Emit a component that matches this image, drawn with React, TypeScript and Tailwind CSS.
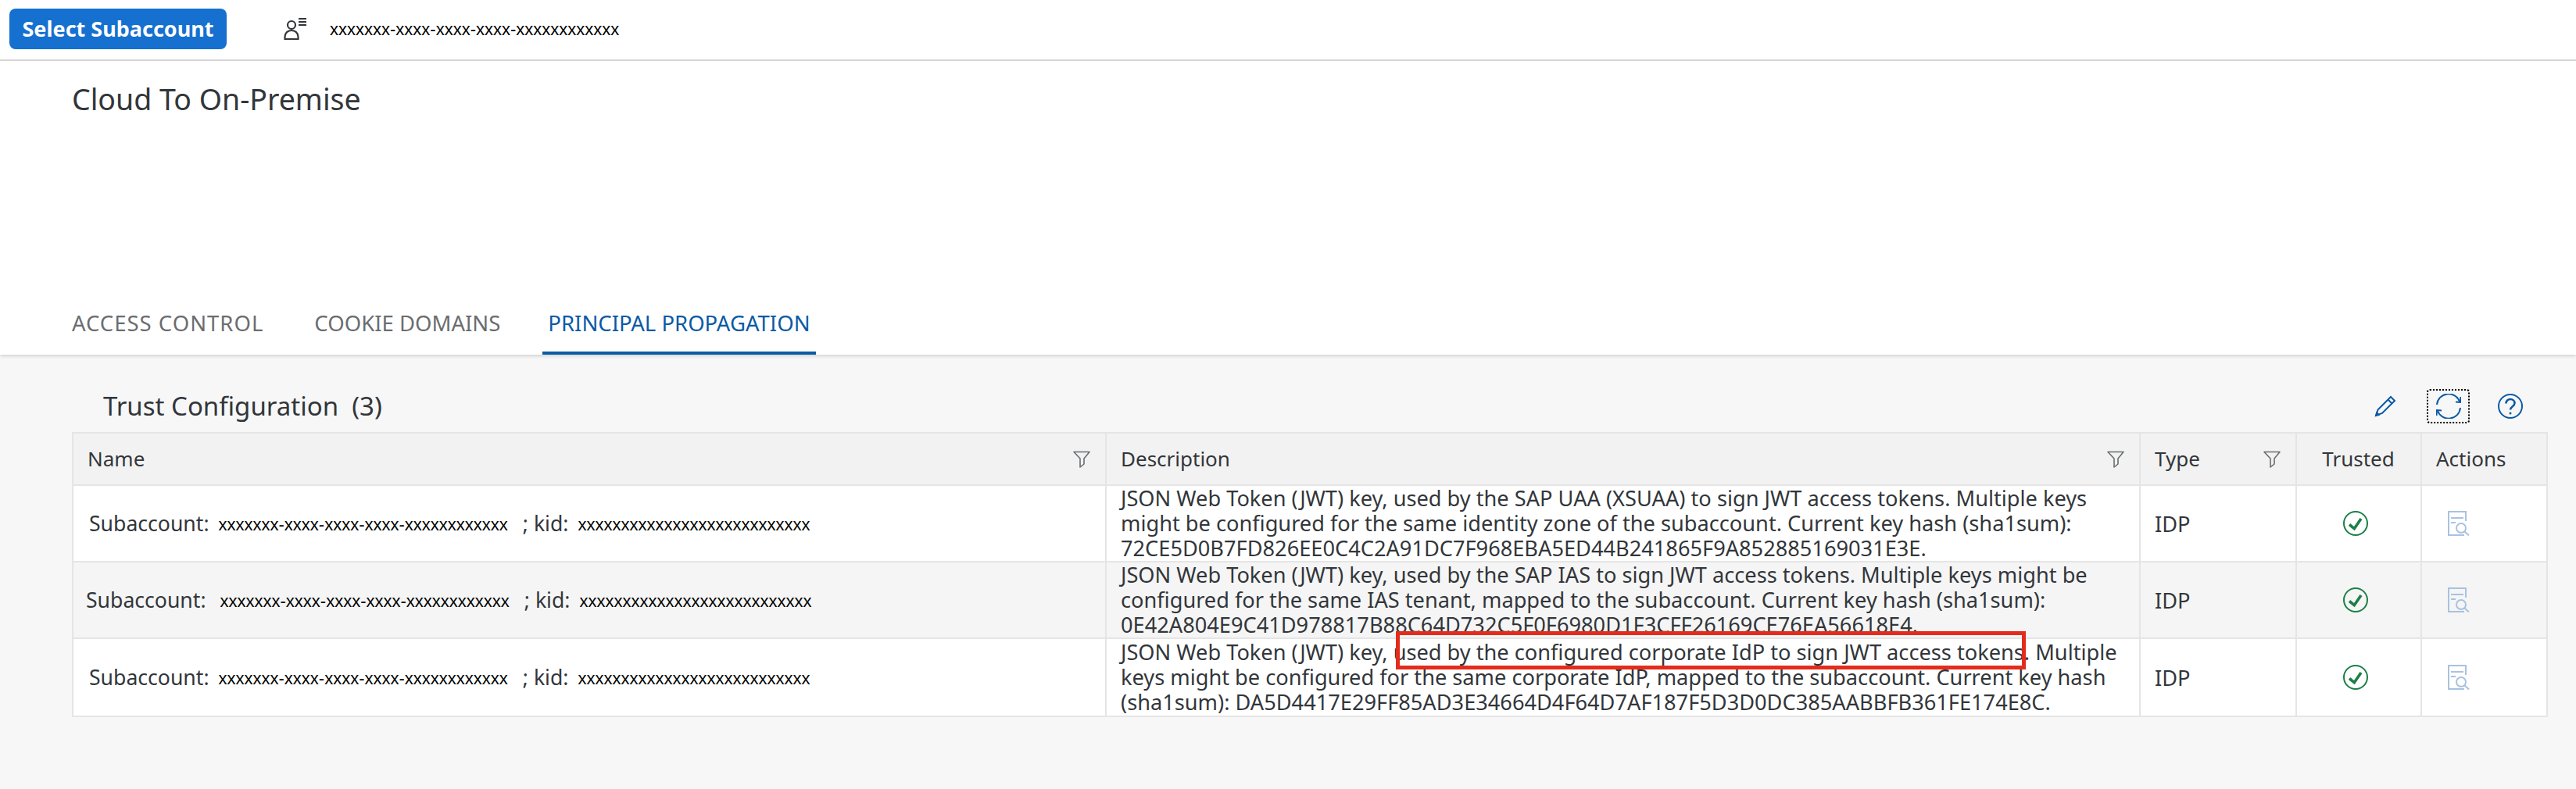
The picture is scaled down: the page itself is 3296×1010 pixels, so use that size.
import { ReactNode } from "react";

const BLUE = "#0a5aa5";

function FilterIcon() {
  return (
    <svg width="22" height="22" viewBox="0 0 22 22" fill="none" stroke="#6a6d70" strokeWidth="1.6">
      <path d="M1 1.5h20l-7 8.5v7l-5 4V10z" strokeLinejoin="round" />
    </svg>
  );
}

function CheckIcon() {
  return (
    <svg className="mr-[8px]" width="32" height="32" viewBox="0 0 32 32" fill="none">
      <circle cx="16" cy="16" r="15" stroke="#1b7f47" strokeWidth="2" />
      <path d="M8 17.5l6.3 5.2L23 10" stroke="#1b7f47" strokeWidth="3.6" />
    </svg>
  );
}

function ReportIcon() {
  return (
    <svg width="28" height="32" viewBox="0 0 28 32" fill="none" stroke="#a8c2e0" strokeWidth="2">
      <path d="M23 13V1H1v30h20" />
      <path d="M4 9h16M4 15h6" />
      <circle cx="17" cy="22" r="6" />
      <path d="M21.5 26.5L27 31.5" />
    </svg>
  );
}

function Th({ children, filter, className }: { children: ReactNode; filter?: boolean; className: string }) {
  return (
    <div className={"flex items-center justify-between border-r-2 border-[#e5e5e5] pl-[18px] pr-[19px] " + className}>
      <span>{children}</span>
      {filter && <FilterIcon />}
    </div>
  );
}

const rows = [
  {
    bg: "bg-white h-[98px]",
    nameIndent: "pl-[20px]",
    gap: "ml-[12px]",
    text: "JSON Web Token (JWT) key, used by the SAP UAA (XSUAA) to sign JWT access tokens. Multiple keys might be configured for the same identity zone of the subaccount. Current key hash (sha1sum): 72CE5D0B7FD826EE0C4C2A91DC7F968EBA5ED44B241865F9A852885169031E3E.",
  },
  {
    bg: "bg-[#f5f5f5] h-[98px]",
    nameIndent: "pl-[16px]",
    gap: "ml-[18px]",
    text: "JSON Web Token (JWT) key, used by the SAP IAS to sign JWT access tokens. Multiple keys might be configured for the same IAS tenant, mapped to the subaccount. Current key hash (sha1sum): 0E42A804E9C41D978817B88C64D732C5F0F6980D1F3CFF26169CE76EA56618E4.",
  },
  {
    bg: "bg-white h-[100px]",
    nameIndent: "pl-[20px]",
    gap: "ml-[12px]",
    text: "JSON Web Token (JWT) key, used by the configured corporate IdP to sign JWT access tokens. Multiple keys might be configured for the same corporate IdP, mapped to the subaccount. Current key hash (sha1sum): DA5D4417E29FF85AD3E34664D4F64D7AF187F5D3D0DC385AABBFB361FE174E8C.",
  },
];

const MASK = "font-['Liberation_Sans',sans-serif] text-[22px] text-black";

export default function App() {
  return (
    <div className="relative flex h-[1010px] w-[3296px] flex-col overflow-hidden bg-[#f7f7f7] font-['Noto_Sans',sans-serif] text-[#32363a]">
      <header className="flex h-[78px] shrink-0 items-center border-b-2 border-[#d9d9d9] bg-white pb-[2px] pl-[12px]">
        <button className="h-[52px] w-[278px] rounded-lg bg-[#1670cf] text-[27px] font-bold text-white">Select Subaccount</button>
        <svg className="ml-[73px]" width="30" height="28" viewBox="0 0 30 28" fill="none" stroke="#32363a" strokeWidth="2.2">
          <circle cx="10" cy="9" r="5" />
          <path d="M1.5 27v-3c0-5 4-8 8.5-8s8.5 3 8.5 8v3z" />
          <path d="M19 1h10M19 5h10M19 9h10" strokeWidth="2" />
        </svg>
        <span className={"ml-[29px] " + MASK}>xxxxxxx-xxxx-xxxx-xxxx-xxxxxxxxxxxx</span>
      </header>

      <section className="flex h-[376px] shrink-0 flex-col justify-between bg-white pl-[92px] shadow-[0_2px_4px_rgba(0,0,0,0.15)]">
        <h1 className="pt-[26px] text-[37.5px] leading-[46px]">Cloud To On-Premise</h1>
        <nav className="flex items-start text-[27.5px] text-[#6a6d70]">
          <a className="mr-[65px] tracking-[1px]">ACCESS CONTROL</a>
          <a className="mr-[54px]">COOKIE DOMAINS</a>
          <a className="border-b-4 border-[#0a5aa5] px-[7px] pb-[16px] text-[#0a5aa5]">PRINCIPAL PROPAGATION</a>
        </nav>
      </section>

      <main className="flex flex-col pl-[92px] pr-[36px]">
        <div className="flex h-[99px] items-center justify-between pl-[40px] pt-[32px]">
          <h2 className="text-[33px]">Trust Configuration&nbsp; (3)</h2>
          <div className="flex items-center pr-[32px]">
            <svg width="28" height="28" viewBox="0 0 28 28" fill="none" stroke={BLUE} strokeWidth="2">
              <path d="M2.5 25.5l2-7L21 2l5 5-16 16z" />
              <path d="M17.5 5.5l5 5" />
              <path d="M0.5 27.5l2-7 5 5z" fill={BLUE} stroke="none" />
            </svg>
            <div className="ml-[39px] flex h-[44px] w-[55px] items-center justify-center rounded-sm border-2 border-dotted border-black">
              <svg width="32" height="32" viewBox="0 0 32 32" fill="none" stroke={BLUE} strokeWidth="2">
                <path d="M1 14A15 15 0 0 1 30 10" />
                <path d="M31 18A15 15 0 0 1 2 22" />
                <path d="M25 10.5l6 .5.5-7M7 21.5l-6-.5-.5 7" />
              </svg>
            </div>
            <svg className="ml-[36px]" width="32" height="32" viewBox="0 0 32 32" fill="none" stroke={BLUE} strokeWidth="2">
              <circle cx="16" cy="16" r="15" />
              <path d="M10.5 12.5c0-3.5 2.5-5.5 5.5-5.5s5.500 2 5.500 5c0 4.500-5.500 4.500-5.500 8.500" strokeWidth="2.6" />
              <circle cx="16" cy="25" r="1.500" fill={BLUE} stroke="none" />
            </svg>
          </div>
        </div>

        <div className="border-2 border-[#e5e5e5] text-[26px]">
          <div className="flex h-[65px] bg-[#f2f2f2]">
            <Th filter className="w-[1322px]">Name</Th>
            <Th filter className="w-[1323px]">Description</Th>
            <Th filter className="w-[200px]">Type</Th>
            <Th className="w-[160px] justify-center">Trusted</Th>
            <div className="flex flex-1 items-center pl-[18px]">Actions</div>
          </div>
          {rows.map((r) => (
            <div key={r.text} className={"flex border-t-2 border-[#e5e5e5] text-[27.2px] " + r.bg}>
              <div className={"flex w-[1322px] items-center border-r-2 border-[#e5e5e5] pt-[2px] text-[26.6px] whitespace-pre " + r.nameIndent}>
                <span>Subaccount:</span>
                <span className={r.gap + " " + MASK}>xxxxxxx-xxxx-xxxx-xxxx-xxxxxxxxxxxx</span>
                <span className="ml-[19px]">; kid:</span>
                <span className={"ml-[12px] " + MASK}>xxxxxxxxxxxxxxxxxxxxxxxxxxx</span>
              </div>
              <div className="flex w-[1323px] items-center border-r-2 border-[#e5e5e5] px-[18px] leading-[32px]">
                <p>{r.text}</p>
              </div>
              <div className="flex w-[200px] items-center border-r-2 border-[#e5e5e5] pl-[18px] pt-[2px]">IDP</div>
              <div className="flex w-[160px] items-center justify-center border-r-2 border-[#e5e5e5]">
                <CheckIcon />
              </div>
              <div className="flex flex-1 items-center pl-[33px]">
                <ReportIcon />
              </div>
            </div>
          ))}
        </div>
      </main>

      {/* annotation drawn on the screenshot */}
      <div className="absolute left-[1786px] top-[808px] h-[49px] w-[806px] border-[5px] border-[#e32c1c]" />
    </div>
  );
}
